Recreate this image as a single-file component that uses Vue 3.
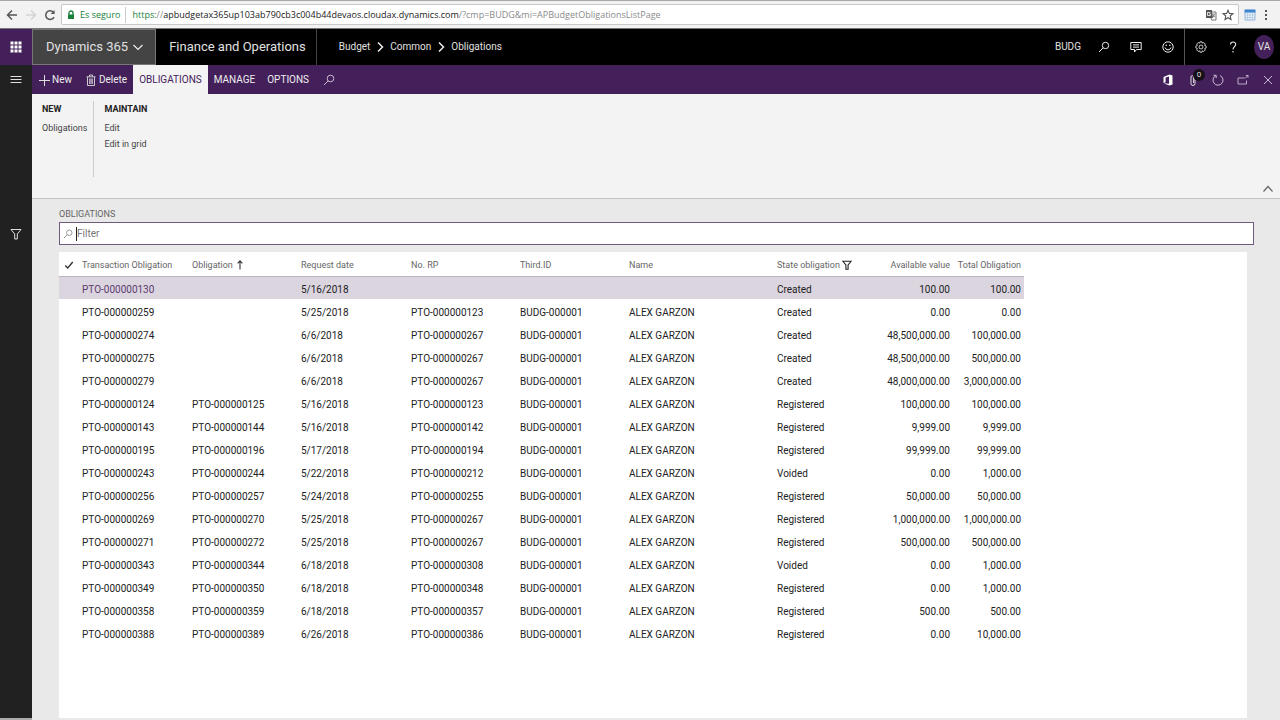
<script setup>
import { ref } from 'vue'

const filter = ref('')
const crumbs = ['Budget', 'Common', 'Obligations']
const rows = [
  ['PTO-000000130', '', '5/16/2018', '', '', '', 'Created', '100.00', '100.00'],
  ['PTO-000000259', '', '5/25/2018', 'PTO-000000123', 'BUDG-000001', 'ALEX GARZON', 'Created', '0.00', '0.00'],
  ['PTO-000000274', '', '6/6/2018', 'PTO-000000267', 'BUDG-000001', 'ALEX GARZON', 'Created', '48,500,000.00', '100,000.00'],
  ['PTO-000000275', '', '6/6/2018', 'PTO-000000267', 'BUDG-000001', 'ALEX GARZON', 'Created', '48,500,000.00', '500,000.00'],
  ['PTO-000000279', '', '6/6/2018', 'PTO-000000267', 'BUDG-000001', 'ALEX GARZON', 'Created', '48,000,000.00', '3,000,000.00'],
  ['PTO-000000124', 'PTO-000000125', '5/16/2018', 'PTO-000000123', 'BUDG-000001', 'ALEX GARZON', 'Registered', '100,000.00', '100,000.00'],
  ['PTO-000000143', 'PTO-000000144', '5/16/2018', 'PTO-000000142', 'BUDG-000001', 'ALEX GARZON', 'Registered', '9,999.00', '9,999.00'],
  ['PTO-000000195', 'PTO-000000196', '5/17/2018', 'PTO-000000194', 'BUDG-000001', 'ALEX GARZON', 'Registered', '99,999.00', '99,999.00'],
  ['PTO-000000243', 'PTO-000000244', '5/22/2018', 'PTO-000000212', 'BUDG-000001', 'ALEX GARZON', 'Voided', '0.00', '1,000.00'],
  ['PTO-000000256', 'PTO-000000257', '5/24/2018', 'PTO-000000255', 'BUDG-000001', 'ALEX GARZON', 'Registered', '50,000.00', '50,000.00'],
  ['PTO-000000269', 'PTO-000000270', '5/25/2018', 'PTO-000000267', 'BUDG-000001', 'ALEX GARZON', 'Registered', '1,000,000.00', '1,000,000.00'],
  ['PTO-000000271', 'PTO-000000272', '5/25/2018', 'PTO-000000267', 'BUDG-000001', 'ALEX GARZON', 'Registered', '500,000.00', '500,000.00'],
  ['PTO-000000343', 'PTO-000000344', '6/18/2018', 'PTO-000000308', 'BUDG-000001', 'ALEX GARZON', 'Voided', '0.00', '1,000.00'],
  ['PTO-000000349', 'PTO-000000350', '6/18/2018', 'PTO-000000348', 'BUDG-000001', 'ALEX GARZON', 'Registered', '0.00', '1,000.00'],
  ['PTO-000000358', 'PTO-000000359', '6/18/2018', 'PTO-000000357', 'BUDG-000001', 'ALEX GARZON', 'Registered', '500.00', '500.00'],
  ['PTO-000000388', 'PTO-000000389', '6/26/2018', 'PTO-000000386', 'BUDG-000001', 'ALEX GARZON', 'Registered', '0.00', '10,000.00'],
]
</script>

<template>
  <div class="page">
    <div class="browser">
      <button class="nav" aria-label="Back"><svg viewBox="0 0 12 12"><path d="M11 6H2M6 1.5 1.5 6 6 10.500" stroke="#555" stroke-width="1.500" /></svg></button>
      <button class="nav" aria-label="Forward"><svg viewBox="0 0 12 12"><path d="M1 6h9M6 1.500 10.500 6 6 10.500" stroke="#d4d4d4" stroke-width="1.500" /></svg></button>
      <button class="nav" aria-label="Reload"><svg viewBox="0 0 12 12"><path d="M10 8.200A4.400 4.400 0 1 1 9.300 3" stroke="#555" stroke-width="1.500" /><path d="M10.600 1v4h-4z" fill="#555" /></svg></button>
      <div class="address">
        <svg class="lock" viewBox="0 0 8 10"><path d="M2 5V3a2 2 0 0 1 4 0v2" stroke="#188038" stroke-width="1.300" /><path d="M1 4.500h6V9H1z" fill="#188038" /></svg>
        <span class="secure">Es seguro</span>
        <span class="url"><span class="scheme">https:</span><span class="dim">//</span>apbudgetax365up103ab790cb3c004b44devaos.cloudax.dynamics.com<span class="dim">/?cmp=BUDG&amp;mi=APBudgetObligationsListPage</span></span>
        <svg class="translate" viewBox="0 0 12 12"><path d="M1 1h6l1 8H1z" fill="#555" /><path d="M7.500 3H11v8H6.500L6 9" stroke="#777" /><path d="M5.500 3.500h-3v3h3V5H4" stroke="#fff" stroke-width=".8" /><path d="M8 5h2.500M9.500 5 8 8.500M8.300 6l2 2.500" stroke="#777" stroke-width=".8" /></svg>
        <svg class="star" viewBox="0 0 12 12"><path d="m6 1.200 1.400 3.200 3.500.3-2.700 2.300.8 3.500L6 8.700l-3 1.800.8-3.500L1.100 4.700l3.500-.3z" stroke="#555" stroke-width="1.100" /></svg>
      </div>
      <svg class="calendar" viewBox="0 0 12 12"><path d="M1 1h10v10H1z" fill="#eef4fb" stroke="#7ba6d2" stroke-width=".8" /><path d="M.6.600h10.800v3H.6z" fill="#3f85cf" /><path d="M1 6h10M1 8.500h10M3.500 4v7M6 4v7M8.500 4v7" stroke="#a9c2dc" stroke-width=".7" /></svg>
      <button class="nav dots" aria-label="Menu"><svg viewBox="0 0 12 12"><path d="M5 1h2v2H5zM5 5h2v2H5zM5 9h2v2H5z" fill="#555" /></svg></button>
    </div>

    <header class="top">
      <button class="waffle" aria-label="Apps"><svg viewBox="0 0 12 12"><path d="M.5.500h3v3h-3zM4.500.500h3v3h-3zM8.500.500h3v3h-3zM.5 4.500h3v3h-3zM4.500 4.500h3v3h-3zM8.500 4.500h3v3h-3zM.5 8.500h3v3h-3zM4.500 8.500h3v3h-3zM8.500 8.500h3v3h-3z" fill="#fff" /></svg></button>
      <button class="brand">Dynamics 365 <svg viewBox="0 0 12 12"><path d="m1.500 4 4.500 4.500L10.500 4" stroke="#eee" stroke-width="1.200" /></svg></button>
      <div class="product">Finance and Operations</div>
      <nav class="crumbs">
        <template v-for="(c, i) in crumbs" :key="c">
          <svg v-if="i" viewBox="0 0 12 12"><path d="m4 1.500 4.500 4.500L4 10.500" stroke="#eee" stroke-width="1.500" /></svg>
          <a href="#">{{ c }}</a>
        </template>
      </nav>
      <div class="tools">
        <button class="company">BUDG</button>
        <button class="tool" aria-label="Search"><svg viewBox="0 0 12 12"><circle cx="7.500" cy="4.500" r="3.200" stroke="#eee" /><path d="M5.200 6.800 1 11" stroke="#eee" /></svg></button>
        <button class="tool" aria-label="Messages"><svg viewBox="0 0 12 12"><path d="M.8 1.500h10.400v7H6.500L4.500 11V8.500H.8zM3 3.900h6M3 6.100h6" stroke="#eee" /></svg></button>
        <button class="tool" aria-label="Feedback"><svg viewBox="0 0 12 12"><circle cx="6" cy="6" r="5.200" stroke="#eee" /><path d="M3 6.500a3.100 3.100 0 0 0 6 0" stroke="#eee" /><circle cx="4.200" cy="4.300" r=".8" fill="#eee" /><circle cx="7.800" cy="4.300" r=".8" fill="#eee" /></svg></button>
        <span class="rule"></span>
        <button class="tool" aria-label="Settings"><svg viewBox="0 0 12 12"><path d="m5 .8-.3 1.400-1.500-.7-1.500 1.600.7 1.300-1.500.6v2l1.500.6-.7 1.300 1.500 1.600 1.500-.7.3 1.400h2l.3-1.400 1.500.7 1.500-1.600-.7-1.300 1.500-.6V5l-1.500-.6.7-1.300-1.500-1.600-1.500.7L7 .8z" stroke="#ddd" stroke-width=".9" /><circle cx="6" cy="6" r="2" stroke="#ddd" stroke-width=".9" /></svg></button>
        <button class="tool" aria-label="Help"><svg viewBox="0 0 12 12"><path d="M3.500 3.500C3.500.200 8.700.200 8.700 3.400 8.700 5.600 6 5.600 6 8.400M6 10v1.500" stroke="#eee" stroke-width="1.100" /></svg></button>
        <button class="avatar">VA</button>
      </div>
    </header>

    <div class="body">
      <aside class="rail">
        <button aria-label="Navigation"><svg viewBox="0 0 12 12"><path d="M.5 2.500h11M.5 5.500h11M.5 8.500h11" stroke="#ddd" /></svg></button>
        <button class="funnel" aria-label="Filter pane"><svg viewBox="0 0 12 12"><path d="M1 1.500h10L7.300 6v5H4.700V6z" stroke="#ddd" /></svg></button>
      </aside>

      <main class="main">
        <div class="actions">
          <button class="act"><svg viewBox="0 0 12 12"><path d="M6.500 1v11M1 6.500h11" stroke="#ddd" /></svg>New</button>
          <button class="act delete"><svg viewBox="0 0 12 12"><path d="M1.500 2.800h9M4.500 2.500V1h3v1.500M2.500 3v8.500h7V3M4.700 4.500V10M6 4.500V10M7.300 4.500V10" stroke="#ddd" stroke-width=".9" /></svg>Delete</button>
          <button class="tab active">OBLIGATIONS</button>
          <button class="tab">MANAGE</button>
          <button class="tab">OPTIONS</button>
          <button class="find" aria-label="Find action"><svg viewBox="0 0 12 12"><circle cx="7.500" cy="4.500" r="3.300" stroke="#c9b9d2" /><path d="M5.200 6.800 1 11" stroke="#c9b9d2" /></svg></button>
          <div class="side">
            <button class="tool" aria-label="Office"><svg viewBox="0 0 12 12"><path d="M1.500 3 7.500.6l3 1v8.800l-3 1-6-2.200 5.500.6V2.400L3.600 3.400v4.800L1.500 9z" fill="#fff" /></svg></button>
            <button class="tool attach" aria-label="Attachments"><svg viewBox="0 0 12 12"><path d="M8 4v5.500a2 2 0 0 1-4 0V3a1.300 1.300 0 0 1 2.600 0v6" stroke="#ddd" /></svg><span class="badge">0</span></button>
            <button class="tool" aria-label="Refresh"><svg viewBox="0 0 12 12"><path d="M4 1.600a5 5 0 1 0 4 0M1.500 1.300h2.700V4" stroke="#c9b9d2" /></svg></button>
            <button class="tool" aria-label="Open in new window"><svg viewBox="0 0 12 12"><path d="M7.500 4H1v6h8.500V6.500M8 4.500l3-3M8.800 1.500H11v2.200" stroke="#c9b9d2" stroke-width=".9" /></svg></button>
            <button class="tool" aria-label="Close"><svg viewBox="0 0 12 12"><path d="m2 2 8 8M10 2l-8 8" stroke="#c9b9d2" /></svg></button>
          </div>
        </div>

        <section class="ribbon">
          <div class="group">
            <h2>NEW</h2>
            <button>Obligations</button>
          </div>
          <div class="group">
            <h2>MAINTAIN</h2>
            <button>Edit</button>
            <button>Edit in grid</button>
          </div>
          <button class="collapse" aria-label="Collapse"><svg viewBox="0 0 12 12"><path d="m1.500 8.500 4.500-5 4.500 5" stroke="#666" stroke-width="1.200" /></svg></button>
        </section>

        <section class="content">
          <label class="title" for="filter">OBLIGATIONS</label>
          <div class="filter">
            <svg viewBox="0 0 12 12"><circle cx="7.500" cy="4.500" r="3.300" stroke="#777" stroke-width=".9" /><path d="M5.200 6.800 1 11" stroke="#777" stroke-width=".9" /></svg>
            <span class="caret"></span>
            <input id="filter" v-model="filter" type="text" placeholder="Filter" />
          </div>
          <div class="grid">
            <table>
              <colgroup><col class="c-check" /><col class="c-a" /><col class="c-b" /><col class="c-a" /><col class="c-b" /><col class="c-b" /><col class="c-name" /><col class="c-state" /><col class="c-value" /><col class="c-total" /></colgroup>
              <thead>
                <tr>
                  <th class="check"><svg viewBox="0 0 12 12"><path d="m1.500 6.500 3 3 6-7" stroke="#333" stroke-width="1.700" /></svg></th>
                  <th>Transaction Obligation</th>
                  <th>Obligation <svg viewBox="0 0 12 12"><path d="M6 11.500V1M3.200 4 6 1l2.800 3" stroke="#333" stroke-width="1.300" /></svg></th>
                  <th>Request date</th>
                  <th>No. RP</th>
                  <th>Third.ID</th>
                  <th>Name</th>
                  <th>State obligation <svg viewBox="0 0 12 12"><path d="M1 1.500h10L7.300 6v5H4.700V6z" stroke="#222" stroke-width="1.300" /></svg></th>
                  <th class="num">Available value</th>
                  <th class="num">Total Obligation</th>
                </tr>
              </thead>
              <tbody>
                <tr v-for="(r, i) in rows" :key="r[0]" :class="{ selected: i === 0 }">
                  <td></td>
                  <td v-for="(v, j) in r" :key="j" :class="{ num: j > 6 }"><a v-if="j === 0" href="#">{{ v }}</a><template v-else>{{ v }}</template></td>
                </tr>
              </tbody>
            </table>
          </div>
        </section>
      </main>
    </div>
  </div>
</template>

<style>
body { margin: 0; }
</style>

<style scoped>
.page {
  display: flex;
  flex-direction: column;
  min-height: 100vh;
  background: #e9e9e9;
  font-family: Roboto, "Open Sans", sans-serif;
  font-size: 10px;
  line-height: 16px;
  color: #222;
}
.page * { box-sizing: border-box; }
button { border: 0; padding: 0; margin: 0; background: none; font: inherit; color: inherit; white-space: nowrap; }
a { color: inherit; text-decoration: none; }
svg { width: 12px; height: 12px; fill: none; flex: none; }

.browser { display: flex; align-items: center; height: 29px; padding: 0 4px 0 2px; background: #f2f2f2; border-top: 1px solid #a9a6aa; border-bottom: 1px solid #777; font-family: "Open Sans", sans-serif; font-size: 9px; }
.nav { display: flex; justify-content: center; width: 19px; }
.dots { width: 20px; }
.address { display: flex; flex: 1; align-items: center; height: 21px; margin-left: 2px; padding: 0 4px; background: #fff; border: 1px solid #c8c8c8; border-radius: 2px; }
.lock { width: 8px; height: 10px; margin: 0 5px 0 1px; }
.secure { color: #188038; padding-right: 5px; border-right: 1px solid #ccc; margin-right: 6px; white-space: nowrap; }
.url { flex: 1; white-space: nowrap; overflow: hidden; }
.scheme { color: #188038; }
.dim { color: #8a8a8a; }
.star { margin-left: 5px; }
.calendar { margin-left: 5px; }

.top { display: flex; align-items: stretch; height: 36px; background: #000; color: #e0e0e0; }
.waffle { display: flex; align-items: center; justify-content: center; width: 32px; background: #44205a; }
.brand { display: flex; align-items: center; gap: 4px; padding: 0 11px 0 13px; background: #444; border: 1px solid #777; font-size: 13px; }
.product { display: flex; align-items: center; padding: 0 10px 0 13px; border-right: 1px solid #444; font-size: 13px; white-space: nowrap; }
.crumbs { display: flex; flex: 1; align-items: center; gap: 4px; padding-left: 22px; }
.tools, .side { display: flex; align-items: center; }
.tool { display: flex; align-items: center; justify-content: center; width: 32px; height: 100%; }
.company { padding-right: 7px; }
.rule { width: 1px; height: 100%; background: #555; }
.avatar { width: 20px; height: 24px; margin: 0 6px 0 5px; border-radius: 50%; background: #44205a; }

.body { display: flex; flex: 1; }
.rail { width: 32px; background: #212121; border-bottom: 2px solid #aaa; }
.rail button { display: flex; align-items: center; justify-content: center; width: 100%; height: 30px; }
.rail .funnel { margin-top: 124px; }
.main { display: flex; flex: 1; flex-direction: column; min-width: 0; }

.actions { display: flex; align-items: stretch; height: 29px; background: #44205a; color: #eee; }
.act { display: flex; align-items: center; gap: 2px; padding-left: 6px; }
.delete { padding: 0 6px 0 13px; }
.tab { padding: 0 6px; }
.active { background: #f3f3f3; color: #44205a; }
.find { display: flex; align-items: center; padding-left: 8px; }
.side { margin-left: auto; }
.side .tool { width: 25px; }
.attach { position: relative; }
.badge { position: absolute; top: 4px; right: 0; width: 12px; height: 12px; border-radius: 50%; background: #161018; font-size: 8px; line-height: 12px; color: #ddd; }

.ribbon { display: flex; height: 105px; padding: 7px 6px 0 10px; background: #f3f3f3; border-bottom: 1px solid #c4c4c4; color: #444; font-size: 9px; }
.group { display: flex; flex-direction: column; align-items: flex-start; }
.group + .group { height: 76px; margin-left: 6px; padding-left: 10px; border-left: 1px solid #ccc; }
.group h2 { margin: 0 0 3px; font-size: 9px; line-height: 16px; color: #222; }
.group button { line-height: 16px; }
.collapse { display: flex; align-self: flex-end; margin: 0 0 3px auto; }

.content { display: flex; flex: 1; flex-direction: column; padding: 7px 26px 2px 27px; }
.title { font-size: 9px; color: #666; }
.filter { display: flex; align-items: center; height: 23px; padding-left: 3px; border: 1px solid #6f5a80; background: #fff; }
.filter svg { width: 10px; height: 10px; }
.caret { width: 1px; height: 14px; margin-left: 3px; background: #222; }
.filter input { flex: 1; min-width: 0; padding: 0; border: 0; outline: 0; background: none; font: inherit; }
.filter input::placeholder { color: #777; opacity: 1; }
.grid { flex: 1; margin: 7px 7px 0 0; background: #fff; }
table { table-layout: fixed; width: 965px; border-collapse: collapse; }
.c-check { width: 23px; }
.c-a { width: 110px; }
.c-b { width: 109px; }
.c-name { width: 148px; }
.c-state { width: 86px; }
.c-value { width: 90px; }
.c-total { width: 71px; }
th { height: 24px; padding: 2px 0 0; border-bottom: 1px solid #bbb6c2; font-size: 9px; font-weight: normal; text-align: left; color: #666; white-space: nowrap; }
th svg { width: 10px; height: 10px; vertical-align: -2px; }
.check { padding-left: 5px; }
td { height: 23px; padding: 4px 0 0; white-space: nowrap; }
.num { padding-right: 3px; text-align: right; }
.selected { background: #dbd5df; }
.selected a { color: #5b3a70; }
</style>
